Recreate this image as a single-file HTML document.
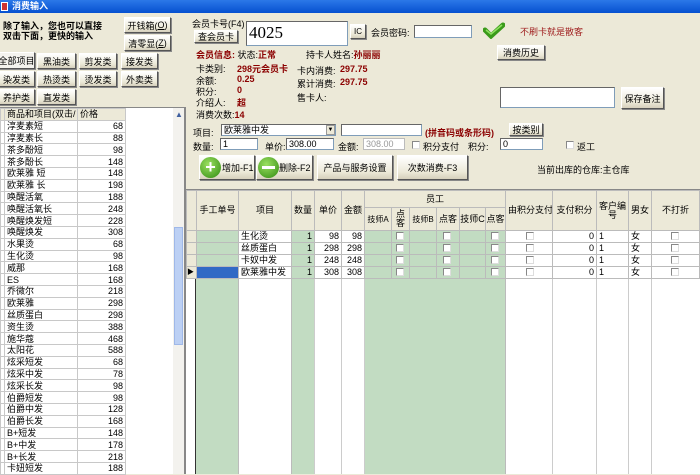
<!DOCTYPE html>
<html><head><meta charset="utf-8"><style>
*{margin:0;padding:0;box-sizing:border-box}
body{width:700px;height:474px;overflow:hidden;background:#ece9d8;font-family:"Liberation Sans","Noto Sans CJK SC","WenQuanYi Zen Hei",sans-serif;font-size:9px;color:#000;position:relative}
.a{position:absolute;white-space:nowrap}
.btn{position:absolute;background:linear-gradient(#fff,#ece9d8 70%,#d6d0bc);border:1px solid #fff;border-right-color:#555;border-bottom-color:#555;box-shadow:1px 1px 0 #888;text-align:center;font-size:9px;display:flex;align-items:center;justify-content:center;white-space:nowrap;overflow:hidden}
.in{position:absolute;background:#fff;border:1px solid #7f9db9;border-top-color:#666;border-left-color:#666;font-size:9px;padding-left:2px;line-height:10px;white-space:nowrap;overflow:hidden}
.red{color:#8b0000;font-weight:bold}
.cb{position:absolute;width:8px;height:8px;border:1px solid #888;border-right-color:#ddd;border-bottom-color:#ddd;background:#fff}
table{border-collapse:collapse}
#list td{border:1px solid #c8c8c8;height:11.8px;font-size:9px;line-height:10px;padding:0 2px;overflow:hidden;white-space:nowrap}
.g td{font-size:9px;line-height:11px;height:12px;padding:0 2px;white-space:nowrap;border:1px solid #bbb;overflow:hidden}
</style></head><body>
<div class="a" style="left:0;top:0;width:700px;height:13px;background:linear-gradient(#2b78e8,#0650d0);"></div>
<div class="a" style="left:1px;top:2px;width:7px;height:9px;background:#c33;border:1px solid #fff"></div>
<div class="a" style="left:12px;top:0;color:#fff;font-weight:bold;font-size:9px;line-height:13px">消费输入</div>

<div class="a" style="left:3px;top:21px;font-weight:bold;font-size:9px;line-height:10px">除了输入，您也可以直接<br>双击下面，更快的输入</div>
<div class="btn" style="left:124px;top:17px;width:47px;height:16px">开钱箱(<u>O</u>)</div>
<div class="btn" style="left:124px;top:35px;width:47px;height:16px">清零显(<u>Z</u>)</div>
<div class="btn" style="left:-2px;top:52px;width:37px;height:17px;background:#f4f3ee">全部项目</div>
<div class="btn" style="left:37px;top:53px;width:39px;height:16px">黑油类</div>
<div class="btn" style="left:79px;top:53px;width:38px;height:16px">剪发类</div>
<div class="btn" style="left:121px;top:53px;width:37px;height:16px">接发类</div>
<div class="btn" style="left:-2px;top:71px;width:37px;height:16px">染发类</div>
<div class="btn" style="left:37px;top:71px;width:39px;height:16px">热烫类</div>
<div class="btn" style="left:79px;top:71px;width:38px;height:16px">烫发类</div>
<div class="btn" style="left:121px;top:71px;width:37px;height:16px">外卖类</div>
<div class="btn" style="left:-2px;top:89px;width:37px;height:16px">养护类</div>
<div class="btn" style="left:37px;top:89px;width:39px;height:16px">直发类</div>

<div class="a" style="left:0;top:107px;width:184px;height:367px;background:#fff;border-top:1px solid #888"></div>
<div class="a" style="left:173px;top:108px;width:11px;height:366px;background:#f3f2ee"></div>
<div class="a" style="left:174px;top:227px;width:9px;height:118px;background:#bcd0f4;border:1px solid #9fb8e8"></div>
<div class="a" style="left:175px;top:110px;font-size:8px;color:#4060a0">▲</div>
<div class="a" style="left:184px;top:107px;width:2px;height:367px;background:#888"></div>
<table id="list" class="a" style="left:0;top:108px;width:125px;table-layout:fixed">
<col style="width:4px"><col style="width:73px"><col style="width:48px">
<tr style="background:#ece9d8"><td></td><td>商品和项目(双击/</td><td>价格</td></tr>
<tr><td></td><td>淳麦素短</td><td align=right>68</td></tr>
<tr><td></td><td>淳麦素长</td><td align=right>88</td></tr>
<tr><td></td><td>茶多酚短</td><td align=right>98</td></tr>
<tr><td></td><td>茶多酚长</td><td align=right>148</td></tr>
<tr><td></td><td>欧莱雅 短</td><td align=right>148</td></tr>
<tr><td></td><td>欧莱雅 长</td><td align=right>198</td></tr>
<tr><td></td><td>唤醒活氧</td><td align=right>188</td></tr>
<tr><td></td><td>唤醒活氧长</td><td align=right>248</td></tr>
<tr><td></td><td>唤醒焕发短</td><td align=right>228</td></tr>
<tr><td></td><td>唤醒焕发</td><td align=right>308</td></tr>
<tr><td></td><td>水果烫</td><td align=right>68</td></tr>
<tr><td></td><td>生化烫</td><td align=right>98</td></tr>
<tr><td></td><td>威那</td><td align=right>168</td></tr>
<tr><td></td><td>ES</td><td align=right>168</td></tr>
<tr><td></td><td>乔微尔</td><td align=right>218</td></tr>
<tr><td></td><td>欧莱雅</td><td align=right>298</td></tr>
<tr><td></td><td>丝质蛋白</td><td align=right>298</td></tr>
<tr><td></td><td>资生烫</td><td align=right>388</td></tr>
<tr><td></td><td>施华蔻</td><td align=right>468</td></tr>
<tr><td></td><td>太阳花</td><td align=right>588</td></tr>
<tr><td></td><td>炫采短发</td><td align=right>68</td></tr>
<tr><td></td><td>炫采中发</td><td align=right>78</td></tr>
<tr><td></td><td>炫采长发</td><td align=right>98</td></tr>
<tr><td></td><td>伯爵短发</td><td align=right>98</td></tr>
<tr><td></td><td>伯爵中发</td><td align=right>128</td></tr>
<tr><td></td><td>伯爵长发</td><td align=right>168</td></tr>
<tr><td></td><td>B+短发</td><td align=right>148</td></tr>
<tr><td></td><td>B+中发</td><td align=right>178</td></tr>
<tr><td></td><td>B+长发</td><td align=right>218</td></tr>
<tr><td></td><td>卡妞短发</td><td align=right>188</td></tr>
</table>

<!-- right top -->
<div class="a" style="left:192px;top:17px">会员卡号(F4)</div>
<div class="btn" style="left:194px;top:30px;width:44px;height:13px">查会员卡</div>
<div class="in" style="left:246px;top:21px;width:102px;height:25px;font-size:17px;line-height:22px;font-family:'Liberation Serif',serif">4025</div>
<div class="btn" style="left:350px;top:24px;width:16px;height:15px;font-size:8px">IC</div>
<div class="a" style="left:371px;top:26px">会员密码:</div>
<div class="in" style="left:414px;top:25px;width:58px;height:13px"></div>
<svg class="a" style="left:483px;top:22px" width="22" height="17" viewBox="0 0 22 17"><path d="M2 8 L8 14 L20 3" stroke="#3a9a1a" stroke-width="5" fill="none" stroke-linecap="round"/><path d="M3 8 L8 12 L19 3" stroke="#8fe060" stroke-width="1.5" fill="none"/></svg>
<div class="a" style="left:520px;top:25px;color:#a02020">不刷卡就是散客</div>

<div class="a" style="left:196px;top:48px"><span class="red">会员信息:</span> 状态:<span class="red">正常</span></div>
<div class="a" style="left:306px;top:48px">持卡人姓名:<span class="red">孙丽丽</span></div>
<div class="a" style="left:196px;top:62px">卡类别:</div><div class="a red" style="left:237px;top:62px">298元会员卡</div>
<div class="a" style="left:196px;top:74px">余额:</div><div class="a red" style="left:237px;top:74px">0.25</div>
<div class="a" style="left:196px;top:85px">积分:</div><div class="a red" style="left:237px;top:85px">0</div>
<div class="a" style="left:196px;top:96px">介绍人:</div><div class="a red" style="left:237px;top:96px">超</div>
<div class="a" style="left:196px;top:108px">消费次数:<span class="red">14</span></div>
<div class="a" style="left:297px;top:64px">卡内消费:</div><div class="a red" style="left:340px;top:64px">297.75</div>
<div class="a" style="left:297px;top:77px">累计消费:</div><div class="a red" style="left:340px;top:77px">297.75</div>
<div class="a" style="left:297px;top:91px">售卡人:</div>
<div class="btn" style="left:497px;top:45px;width:48px;height:15px">消费历史</div>
<div class="in" style="left:500px;top:87px;width:115px;height:21px"></div>
<div class="btn" style="left:621px;top:87px;width:43px;height:22px">保存备注</div>

<div class="a" style="left:193px;top:126px">项目:</div>
<div class="in" style="left:221px;top:124px;width:115px;height:12px">欧莱雅中发</div>
<div class="a" style="left:326px;top:125px;width:9px;height:10px;background:#ece9d8;border:1px solid #999;font-size:6px;text-align:center;line-height:9px">▼</div>
<div class="in" style="left:341px;top:124px;width:81px;height:12px"></div>
<div class="a red" style="left:425px;top:126px">(拼音码或条形码)</div>
<div class="btn" style="left:509px;top:123px;width:34px;height:13px">按类别</div>

<div class="a" style="left:193px;top:140px">数量:</div>
<div class="in" style="left:220px;top:138px;width:38px;height:12px">1</div>
<div class="a" style="left:265px;top:140px">单价:</div>
<div class="in" style="left:286px;top:138px;width:48px;height:12px">308.00</div>
<div class="a" style="left:338px;top:140px">金额:</div>
<div class="in" style="left:363px;top:138px;width:42px;height:12px;color:#999;border-color:#bbb">308.00</div>
<div class="cb" style="left:412px;top:141px"></div><div class="a" style="left:423px;top:140px">积分支付</div>
<div class="a" style="left:468px;top:140px">积分:</div>
<div class="in" style="left:500px;top:138px;width:43px;height:12px">0</div>
<div class="cb" style="left:566px;top:141px"></div><div class="a" style="left:577px;top:140px">返工</div>

<div class="btn" style="left:199px;top:155px;width:56px;height:25px;justify-content:flex-start;padding-left:22px">增加-F1</div>
<div class="a" style="left:200px;top:157px;width:21px;height:21px;border-radius:50%;background:radial-gradient(circle at 40% 35%,#9be060,#2f8a10);color:#fff;font-weight:bold;font-size:18px;line-height:20px;text-align:center">+</div>
<div class="btn" style="left:256px;top:155px;width:57px;height:25px;justify-content:flex-start;padding-left:22px">删除-F2</div>
<div class="a" style="left:258px;top:157px;width:21px;height:21px;border-radius:50%;background:radial-gradient(circle at 40% 35%,#9be060,#2f8a10)"><div style="position:absolute;left:4px;top:9px;width:13px;height:3px;background:#fff"></div></div>
<div class="btn" style="left:317px;top:155px;width:76px;height:25px">产品与服务设置</div>
<div class="btn" style="left:397px;top:155px;width:71px;height:25px">次数消费-F3</div>
<div class="a" style="left:537px;top:163px">当前出库的仓库:主仓库</div>

<!-- grid -->
<div class="a" style="left:186px;top:189px;width:514px;height:285px;background:#fff;border-top:1px solid #888"></div>
<div class="a" style="left:196px;top:230px;width:42px;height:244px;background:#c2dcc2"></div>
<div class="a" style="left:291px;top:230px;width:23px;height:244px;background:#c2dcc2"></div>
<div class="a" style="left:364px;top:230px;width:141px;height:244px;background:#c2dcc2"></div>
<div class="a" style="left:195px;top:230px;width:1px;height:244px;background:#333"></div>
<div class="a" style="left:238px;top:266px;width:1px;height:208px;background:#bbb"></div>
<div class="a" style="left:291px;top:266px;width:1px;height:208px;background:#bbb"></div>
<div class="a" style="left:314px;top:266px;width:1px;height:208px;background:#ccc"></div>
<div class="a" style="left:341px;top:266px;width:1px;height:208px;background:#ccc"></div>
<div class="a" style="left:364px;top:266px;width:1px;height:208px;background:#ccc"></div>
<div class="a" style="left:505px;top:266px;width:1px;height:208px;background:#bbb"></div>
<div class="a" style="left:552px;top:266px;width:1px;height:208px;background:#ccc"></div>
<div class="a" style="left:596px;top:266px;width:1px;height:208px;background:#ccc"></div>
<div class="a" style="left:628px;top:266px;width:1px;height:208px;background:#ccc"></div>
<div class="a" style="left:651px;top:266px;width:1px;height:208px;background:#ccc"></div>
<table class="a g" style="left:186px;top:190px;width:513px;table-layout:fixed">
<col style="width:10px"><col style="width:42px"><col style="width:53px"><col style="width:23px"><col style="width:27px"><col style="width:23px"><col style="width:27px"><col style="width:18px"><col style="width:27px"><col style="width:23px"><col style="width:26px"><col style="width:20px"><col style="width:47px"><col style="width:44px"><col style="width:32px"><col style="width:23px"><col style="width:48px">
<tr style="background:#ece9d8;text-align:center"><td rowspan=2></td><td rowspan=2>手工单号</td><td rowspan=2>项目</td><td rowspan=2>数量</td><td rowspan=2>单价</td><td rowspan=2>金额</td><td colspan=6 style="height:17px">员工</td><td rowspan=2>由积分支付</td><td rowspan=2>支付积分</td><td rowspan=2 style="white-space:normal;line-height:9px">客户编号</td><td rowspan=2>男女</td><td rowspan=2>不打折</td></tr>
<tr style="background:#ece9d8;text-align:center;height:23px"><td style="font-size:8px;padding:0">技师A</td><td style="white-space:normal;line-height:9px;padding:0">点客</td><td style="font-size:8px;padding:0">技师B</td><td style="padding:0">点客</td><td style="white-space:normal;line-height:9px;padding:0">技师C</td><td style="padding:0">点客</td></tr>
</table>
<div class="a" style="left:186px;top:230px;width:513px">
<table class="g" style="width:513px;table-layout:fixed">
<col style="width:10px"><col style="width:42px"><col style="width:53px"><col style="width:23px"><col style="width:27px"><col style="width:23px"><col style="width:27px"><col style="width:18px"><col style="width:27px"><col style="width:23px"><col style="width:26px"><col style="width:20px"><col style="width:47px"><col style="width:44px"><col style="width:32px"><col style="width:23px"><col style="width:48px">
<tr><td style="background:#ece9d8"></td><td style="background:#c2dcc2"></td><td>生化烫</td><td align=right style="background:#c2dcc2">1</td><td align=right>98</td><td align=right>98</td><td style="background:#c2dcc2"></td><td style="background:#c2dcc2"></td><td style="background:#c2dcc2"></td><td style="background:#c2dcc2"></td><td style="background:#c2dcc2"></td><td style="background:#c2dcc2"></td><td></td><td align=right>0</td><td>1</td><td>女</td><td></td></tr>
<tr><td style="background:#ece9d8"></td><td style="background:#c2dcc2"></td><td>丝质蛋白</td><td align=right style="background:#c2dcc2">1</td><td align=right>298</td><td align=right>298</td><td style="background:#c2dcc2"></td><td style="background:#c2dcc2"></td><td style="background:#c2dcc2"></td><td style="background:#c2dcc2"></td><td style="background:#c2dcc2"></td><td style="background:#c2dcc2"></td><td></td><td align=right>0</td><td>1</td><td>女</td><td></td></tr>
<tr><td style="background:#ece9d8"></td><td style="background:#c2dcc2"></td><td>卡奴中发</td><td align=right style="background:#c2dcc2">1</td><td align=right>248</td><td align=right>248</td><td style="background:#c2dcc2"></td><td style="background:#c2dcc2"></td><td style="background:#c2dcc2"></td><td style="background:#c2dcc2"></td><td style="background:#c2dcc2"></td><td style="background:#c2dcc2"></td><td></td><td align=right>0</td><td>1</td><td>女</td><td></td></tr>
<tr><td style="background:#ece9d8;font-size:7px;padding:0">▶</td><td style="background:#316ac5"></td><td>欧莱雅中发</td><td align=right style="background:#c2dcc2">1</td><td align=right>308</td><td align=right>308</td><td style="background:#c2dcc2"></td><td style="background:#c2dcc2"></td><td style="background:#c2dcc2"></td><td style="background:#c2dcc2"></td><td style="background:#c2dcc2"></td><td style="background:#c2dcc2"></td><td></td><td align=right>0</td><td>1</td><td>女</td><td></td></tr>
</table></div>
<div class="cb" style="left:396px;top:232px"></div><div class="cb" style="left:443px;top:232px"></div><div class="cb" style="left:491px;top:232px"></div><div class="cb" style="left:526px;top:232px"></div><div class="cb" style="left:671px;top:232px"></div>
<div class="cb" style="left:396px;top:244px"></div><div class="cb" style="left:443px;top:244px"></div><div class="cb" style="left:491px;top:244px"></div><div class="cb" style="left:526px;top:244px"></div><div class="cb" style="left:671px;top:244px"></div>
<div class="cb" style="left:396px;top:256px"></div><div class="cb" style="left:443px;top:256px"></div><div class="cb" style="left:491px;top:256px"></div><div class="cb" style="left:526px;top:256px"></div><div class="cb" style="left:671px;top:256px"></div>
<div class="cb" style="left:396px;top:268px"></div><div class="cb" style="left:443px;top:268px"></div><div class="cb" style="left:491px;top:268px"></div><div class="cb" style="left:526px;top:268px"></div><div class="cb" style="left:671px;top:268px"></div>
</body></html>
